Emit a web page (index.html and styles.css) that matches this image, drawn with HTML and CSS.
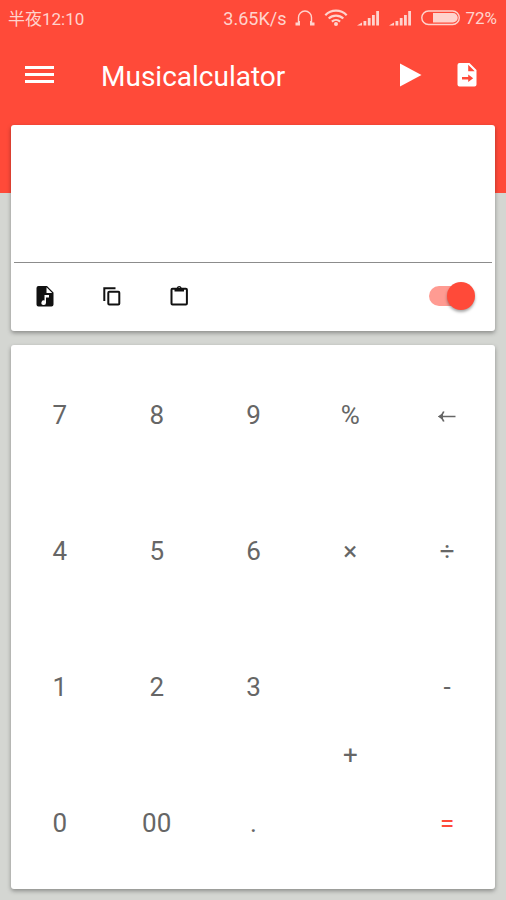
FILE: index.html
```html
<!DOCTYPE html>
<html lang="en">
<head>
<meta charset="utf-8">
<meta name="viewport" content="width=device-width, initial-scale=1">
<title>Musicalculator</title>
<link rel="stylesheet" href="styles.css">
</head>
<body>
<header class="top">
  <div class="status">
    <span class="clock" lang="zh">半夜12:10</span>
    <div class="signals">
      <span class="rate">3.65K/s</span>
      <svg width="20" height="18" viewBox="0 0 20 18" aria-hidden="true"><path d="M3.500 15V8.500a6.500 6.500 0 0 1 13 0V15" fill="none" stroke="currentColor" stroke-width="1.400"/><path d="M.5 13.500h2.500V12h2v4.500H.5zM19.500 13.500H17V12h-2v4.500h4.500z" fill="currentColor"/></svg>
      <svg width="24" height="18" viewBox="0 0 24 18" aria-hidden="true"><g fill="none" stroke="currentColor" stroke-width="2.200"><path d="M1.300 6.200a15 15 0 0 1 21.400 0"/><path d="M4.700 9.500a10.500 10.500 0 0 1 14.600 0"/><path d="M7.900 12.600a6 6 0 0 1 8.200 0"/></g><circle cx="12" cy="15" r="2" fill="currentColor"/></svg>
      <svg width="23" height="18" viewBox="0 0 23 18" aria-hidden="true"><path d="M0 16.500l5-3v3zM6.500 12h2.800v4.500H6.500zM10.800 9h2.800v7.500h-2.800zM15 6h2.800v10.500H15zM19.200 2H22v14.500h-2.800z" fill="currentColor"/></svg>
      <svg width="23" height="18" viewBox="0 0 23 18" aria-hidden="true"><path d="M0 16.500l5-3v3zM6.500 12h2.800v4.500H6.500zM10.800 9h2.800v7.500h-2.800zM15 6h2.800v10.500H15zM19.200 2H22v14.500h-2.800z" fill="currentColor"/></svg>
      <svg width="40" height="18" viewBox="0 0 40 18" aria-hidden="true"><rect x=".8" y="2" width="37.500" height="13.500" rx="6.700" fill="none" stroke="currentColor" stroke-width="1.400"/><path d="M12 4h20a4.700 4.700 0 0 1 0 9.500H12z" fill="currentColor"/></svg>
      <span class="level">72%</span>
    </div>
  </div>
  <div class="toolbar">
    <button class="tool" type="button" aria-label="Menu"><svg width="30" height="30" viewBox="0 0 30 30"><path d="M0 6h29v3H0zM0 13h29v3H0zM0 20h29v3H0z" fill="currentColor"/></svg></button>
    <h1 class="title">Musicalculator</h1>
    <button class="tool" type="button" aria-label="Play"><svg width="30" height="30" viewBox="0 0 30 30"><path d="M5 3.500v23l21.500-11.500z" fill="currentColor"/></svg></button>
    <button class="tool" type="button" aria-label="Export"><svg width="30" height="30" viewBox="0 0 30 30"><path fill-rule="evenodd" d="M7.500 3h10l7 7V24.500a2 2 0 0 1-2 2h-15a2 2 0 0 1-2-2V5A2 2 0 0 1 7.500 3zM16.200 4.800v6.500h6.500zM10 16.900v2.600h6.200V22l5-3.800-5-3.800v2.500z" fill="currentColor"/></svg></button>
  </div>
</header>
<main class="cards">
  <section class="card display">
    <textarea class="entry" aria-label="Expression"></textarea>
    <div class="actions">
      <button class="action" type="button" aria-label="Music file"><svg width="24" height="24" viewBox="0 0 24 24"><path fill-rule="evenodd" d="M5.500 2H14l6.500 6.500V20.500a2 2 0 0 1-2 2h-13a2 2 0 0 1-2-2V4a2 2 0 0 1 2-2zM13.500 3.300V9h5.700zM11.500 11v5.600a2.300 2.300 0 1 0 1.500 2.200V13.500h3V11z" fill="currentColor"/></svg></button>
      <button class="action" type="button" aria-label="Copy"><svg width="24" height="24" viewBox="0 0 24 24"><path d="M4.300 17V4.300H15.500" fill="none" stroke="currentColor" stroke-width="2"/><rect x="8.300" y="7.700" width="11" height="12.800" rx="1" fill="none" stroke="currentColor" stroke-width="2"/></svg></button>
      <button class="action" type="button" aria-label="Paste"><svg width="24" height="24" viewBox="0 0 24 24"><rect x="4.500" y="4.700" width="15.400" height="15.800" rx="1" fill="none" stroke="currentColor" stroke-width="2"/><path fill-rule="evenodd" d="M7.500 4H9.700a2.600 2.600 0 0 1 5 0H17v3.500H7.500zM12.200 3.200a.8.8 0 1 0 .1 0z" fill="currentColor"/></svg></button>
      <input class="switch" type="checkbox" role="switch" aria-label="Sound" checked>
    </div>
  </section>
  <section class="card keys" aria-label="Keypad">
    <button type="button">7</button><button type="button">8</button><button type="button">9</button><button type="button">%</button>
    <button type="button" aria-label="Backspace"><svg width="18" height="18" viewBox="0 0 18 18"><path d="M2 10.500h15.500" fill="none" stroke="currentColor" stroke-width="1.500"/><path d="M5.800 5.500Q4.500 9 1.500 10.500q3 1.500 4.300 5" fill="none" stroke="currentColor" stroke-width="1.700"/><path d="M.3 10.500L5 7.500v6z" fill="currentColor"/></svg></button>
    <button type="button">4</button><button type="button">5</button><button type="button">6</button><button type="button">×</button><button type="button">÷</button>
    <button type="button">1</button><button type="button">2</button><button type="button">3</button><button class="plus" type="button">+</button><button type="button">-</button>
    <button type="button">0</button><button type="button">00</button><button type="button">.</button><button class="equals" type="button">=</button>
  </section>
</main>
</body>
</html>
```
FILE: styles.css
```css
* {
  box-sizing: border-box;
}

body {
  --accent: #ff4a39;
  min-height: 100vh;
  margin: 0;
  display: flex;
  flex-direction: column;
  background: #d4d6d2;
  font-family: Roboto, "Noto Sans CJK SC", sans-serif;
}

button {
  display: flex;
  align-items: center;
  justify-content: center;
  padding: 0;
  border: 0;
  background: none;
  color: inherit;
  font: inherit;
}

.top {
  padding-bottom: 80px;
  background: var(--accent);
  color: #fff;
}

.status {
  display: flex;
  align-items: center;
  justify-content: space-between;
  height: 36px;
  padding: 0 9px 0 8px;
  color: #ffd3cd;
  font-size: 18px;
}

.clock {
  padding-bottom: 2px;
  font-size: 17px;
}

.signals {
  display: flex;
  align-items: center;
  gap: 9px;
}

.level {
  margin-left: -5px;
  font-size: 17px;
}

.toolbar {
  display: flex;
  align-items: center;
  height: 77px;
  padding: 0 11px;
}

.tool {
  width: 57px;
  height: 57px;
}

.title {
  flex: 1;
  margin: 0 0 0 33px;
  padding-top: 4px;
  font-size: 28px;
  font-weight: 400;
}

.cards {
  flex: 1;
  display: flex;
  flex-direction: column;
  gap: 14px;
  margin-top: -68px;
  padding: 0 11px 11px;
}

.card {
  border-radius: 3px;
  background: #fff;
  box-shadow: 0 2px 4px rgba(0, 0, 0, 0.35);
}

.display {
  display: flex;
  flex-direction: column;
  padding: 3px;
}

.entry {
  height: 135px;
  padding: 8px;
  border: 0;
  border-bottom: 1px solid #8c8c8c;
  outline: 0;
  background: none;
  resize: none;
  font: inherit;
  font-size: 28px;
}

.actions {
  display: flex;
  align-items: center;
  height: 65px;
  padding: 0 17px 0 0;
  color: #111;
}

.action {
  width: 67px;
  height: 48px;
  padding-right: 6px;
}

.switch {
  position: relative;
  appearance: none;
  width: 46px;
  height: 28px;
  margin: 0 0 0 auto;
}

.switch::before {
  content: "";
  position: absolute;
  inset: 4px 4px 4px 0;
  border-radius: 10px;
  background: #ff9b92;
}

.switch::after {
  content: "";
  position: absolute;
  top: 0;
  right: 0;
  width: 28px;
  height: 28px;
  border-radius: 50%;
  background: var(--accent);
  box-shadow: 0 2px 3px rgba(0, 0, 0, 0.35);
}

.keys {
  flex: 1;
  display: grid;
  grid-template-columns: repeat(5, 1fr);
  grid-template-rows: repeat(4, 1fr);
  color: #666;
  font-size: 26px;
}

.keys button {
  padding: 4px 0 0 1px;
}

.plus {
  grid-row: span 2;
}

.keys .equals {
  grid-column: 5;
  color: var(--accent);
}
```
